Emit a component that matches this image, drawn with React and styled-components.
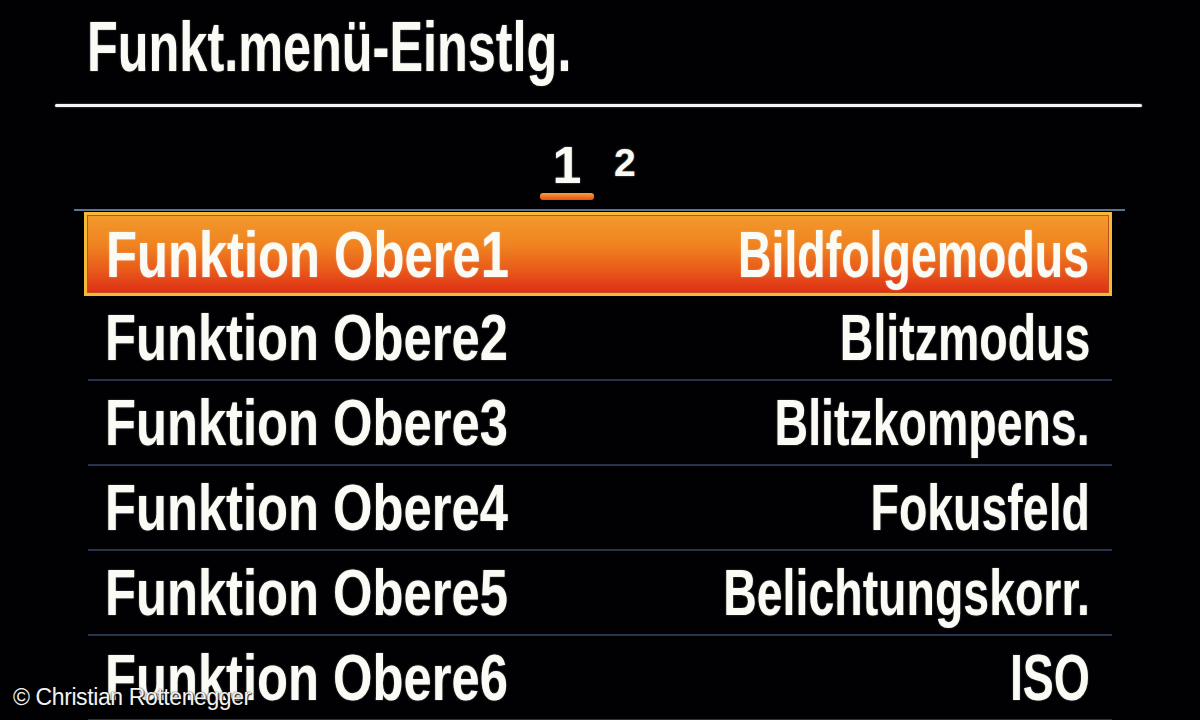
import React from "react";
import styled, { createGlobalStyle } from "styled-components";

const Global = createGlobalStyle`
  html, body { margin: 0; padding: 0; background: #000; }
  body { font-family: "Liberation Sans", Arial, sans-serif; }
`;

const Screen = styled.div`
  position: relative;
  width: 1200px;
  height: 720px;
  overflow: hidden;
  background: #010103;
  color: #fff;
  font-family: "Liberation Sans", Arial, sans-serif;
  font-weight: 700;
`;

const Header = styled.header`
  height: 104px;
  padding-left: 87px;
  display: flex;
  align-items: flex-start;
  box-sizing: border-box;
`;

/* camera menus use a narrow bold face; squeeze the sans horizontally */
const Title = styled.h1`
  margin: 0;
  padding-top: 9px;
  font-size: 70px;
  line-height: 76px;
  font-weight: 700;
  white-space: nowrap;
  color: #fbfbf6;
  transform: scaleX(0.72);
  transform-origin: left center;
  text-shadow: 0 0 2px rgba(255, 255, 255, 0.5);
`;

const Rule = styled.div`
  height: 3px;
  margin: 0 58px 0 55px;
  background: #f4f6fa;
  border-radius: 2px;
  box-shadow: 0 0 2px rgba(200, 210, 255, 0.6);
`;

const Tabs = styled.nav`
  display: flex;
  align-items: flex-start;
  gap: 20px;
  padding-left: 540px;
  padding-top: 32px;
  height: 102px;
  box-sizing: border-box;
`;

const Tab = styled.div`
  display: flex;
  flex-direction: column;
  align-items: center;
  width: ${(p) => (p.$active ? "54px" : "auto")};
  font-size: ${(p) => (p.$active ? "52px" : "39px")};
  line-height: ${(p) => (p.$active ? "52px" : "40px")};
  margin-top: ${(p) => (p.$active ? "0" : "4px")};
  color: #fbfbf6;
  text-shadow: 0 0 2px rgba(255, 255, 255, 0.5);
`;

const TabBar = styled.span`
  display: block;
  width: 54px;
  height: 7px;
  margin-top: 2px;
  border-radius: 3px;
  background: linear-gradient(#f6a23a, #e8500f);
`;

const List = styled.ul`
  list-style: none;
  margin: 0 88px 0 84px;
  padding: 0;
  border-top: 3px solid transparent;
  position: relative;
  &::before {
    content: "";
    position: absolute;
    top: -3px;
    left: -10px;
    right: -13px;
    height: 2px;
    background: #5d7394;
  }
`;

const Row = styled.li`
  height: ${(p) => (p.$selected ? "84px" : "85px")};
  box-sizing: border-box;
  display: flex;
  align-items: center;
  padding: 0 ${(p) => (p.$selected ? "20px" : "22px")} 0
    ${(p) => (p.$selected ? "19px" : "17px")};
  font-size: 65px;
  color: #fbfbf6;
  text-shadow: 0 0 2px rgba(255, 255, 255, 0.45);
  white-space: nowrap;
  ${(p) =>
    p.$selected
      ? `
    border: 3px solid #f5b838;
    box-shadow: inset 0 0 0 1px #c0501c;
    background: linear-gradient(#f39a2c 0%, #ef8220 40%, #e8581a 72%, #de2e17 100%);
  `
      : `
    margin-left: 4px;
    border-bottom: 2px solid #26344c;
  `}
`;

const Label = styled.span`
  flex: 0 1 auto;
  min-width: 0;
  display: inline-block;
  transform: scaleX(0.78);
  transform-origin: left center;
`;

const Value = styled.span`
  flex: 0 0 auto;
  margin-left: auto;
  display: inline-block;
  transform: scaleX(0.715);
  transform-origin: right center;
`;

const Credit = styled.div`
  position: absolute;
  left: 13px;
  bottom: 9px;
  font-family: "Liberation Sans", Arial, sans-serif;
  font-weight: 400;
  font-size: 23px;
  color: #f2f2f2;
  letter-spacing: -0.4px;
  text-shadow: 1px 1px 1px rgba(0, 0, 0, 0.8), 0 0 2px rgba(0, 0, 0, 0.8);
`;

const items = [
  ["Funktion Obere1", "Bildfolgemodus"],
  ["Funktion Obere2", "Blitzmodus"],
  ["Funktion Obere3", "Blitzkompens."],
  ["Funktion Obere4", "Fokusfeld"],
  ["Funktion Obere5", "Belichtungskorr."],
  ["Funktion Obere6", "ISO"],
];

export default function App() {
  return (
    <Screen>
      <Global />
      <Header>
        <Title>Funkt.menü-Einstlg.</Title>
      </Header>
      <Rule />
      <Tabs>
        <Tab $active>
          1
          <TabBar />
        </Tab>
        <Tab>2</Tab>
      </Tabs>
      <List>
        {items.map(([label, value], i) => (
          <Row key={label} $selected={i === 0}>
            <Label>{label}</Label>
            <Value>{value}</Value>
          </Row>
        ))}
      </List>
      <Credit>© Christian Rottenegger</Credit>
    </Screen>
  );
}
